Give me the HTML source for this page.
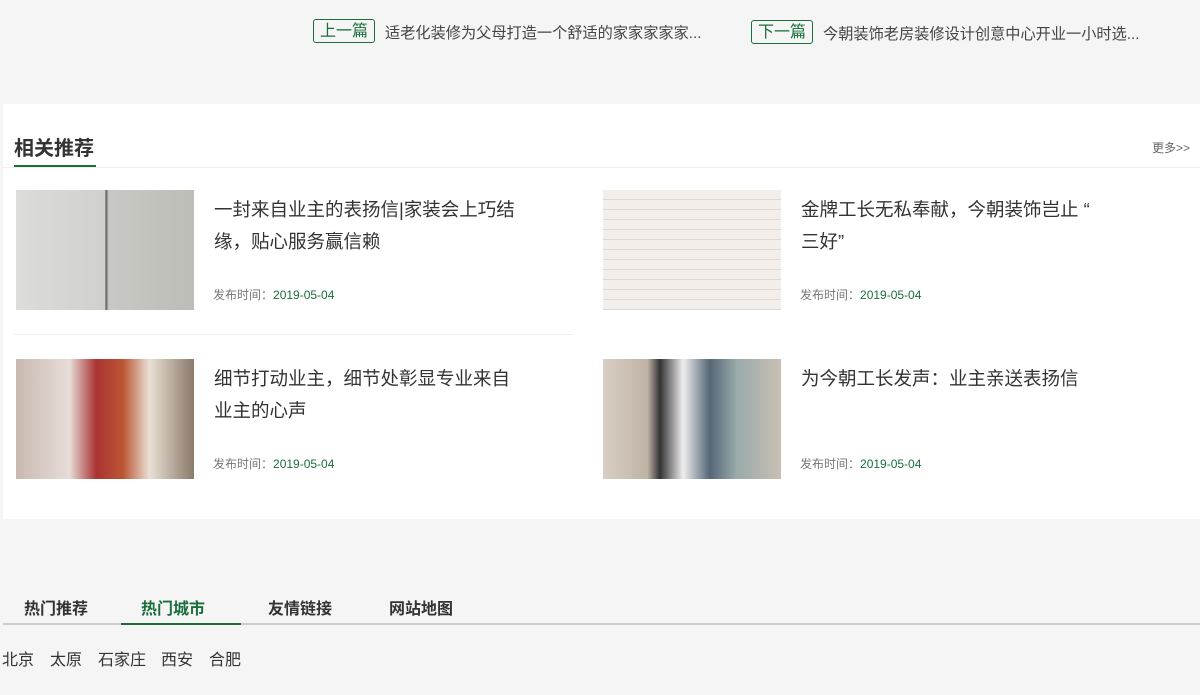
<!DOCTYPE html>
<html><head><meta charset="utf-8"><style>
*{margin:0;padding:0;box-sizing:border-box}
body{width:1200px;height:695px;background:#f5f5f5;font-family:"Liberation Sans","Noto Sans CJK SC",sans-serif;position:relative;overflow:hidden;color:#333}
.a{position:absolute;white-space:nowrap}
.tag{border:1px solid #1a6e3c;border-radius:3px;color:#1a6e3c;font-size:16px;line-height:23px;padding:0 6px;height:24px}
.nt{font-size:15.2px;color:#444}
.panel{position:absolute;left:3px;top:104px;width:1197px;height:415px;background:#fff}
.img{position:absolute;width:178px;height:120px}
.t{font-size:18.5px;color:#333;line-height:32px}
.d{font-size:12px;color:#777}
.d span{color:#1a6e3c}
.tab{font-size:16px;font-weight:bold;color:#333}
.city{font-size:16px;color:#333}
</style></head><body>
<div class="a tag" style="left:313px;top:19px">上一篇</div>
<div class="a nt" style="left:385px;top:21px">适老化装修为父母打造一个舒适的家家家家家...</div>
<div class="a tag" style="left:751px;top:20px">下一篇</div>
<div class="a nt" style="left:823px;top:22px">今朝装饰老房装修设计创意中心开业一小时选...</div>
<div class="panel"></div>
<div class="a" style="left:14px;top:132px;font-size:20px;font-weight:bold;color:#333">相关推荐</div>
<div class="a" style="left:3px;top:167px;width:1197px;height:1px;background:#eee"></div>
<div class="a" style="left:14px;top:165px;width:82px;height:2px;background:#1a6e3c"></div>
<div class="a" style="left:1152px;top:139px;font-size:12px;color:#666">更多&gt;&gt;</div>
<div class="img" style="left:16px;top:190px;background:linear-gradient(90deg,#dcdcd8 0,#d0d0cc 50%,#555 50.5%,#c8c8c4 52%,#bdbdb8 100%)"></div>
<div class="a t" style="left:214px;top:194px">一封来自业主的表扬信|家装会上巧结<br>缘，贴心服务赢信赖</div>
<div class="a d" style="left:213px;top:286px">发布时间：<span>2019-05-04</span></div>
<div class="img" style="left:603px;top:190px;background:repeating-linear-gradient(180deg,#f2eeea 0,#f2eeea 9px,#d9b8b8 10px)"></div>
<div class="a t" style="left:801px;top:194px">金牌工长无私奉献，今朝装饰岂止 “<br>三好”</div>
<div class="a d" style="left:800px;top:286px">发布时间：<span>2019-05-04</span></div>
<div class="a" style="left:14px;top:334px;width:559px;height:1px;background:#eee"></div>
<div class="img" style="left:16px;top:359px;background:linear-gradient(90deg,#c9b9b0 0,#e6ddd8 30%,#a33 45%,#b53 60%,#e8e0d4 75%,#8a7a6a 100%)"></div>
<div class="a t" style="left:214px;top:363px">细节打动业主，细节处彰显专业来自<br>业主的心声</div>
<div class="a d" style="left:213px;top:455px">发布时间：<span>2019-05-04</span></div>
<div class="img" style="left:603px;top:359px;background:linear-gradient(90deg,#d8cfc4 0,#bfb3a5 25%,#333 32%,#eee 45%,#567 60%,#9aa 75%,#c9bfb4 100%)"></div>
<div class="a t" style="left:801px;top:363px">为今朝工长发声：业主亲送表扬信</div>
<div class="a d" style="left:800px;top:455px">发布时间：<span>2019-05-04</span></div>
<div class="a tab" style="left:24px;top:595px">热门推荐</div>
<div class="a tab" style="left:141px;top:595px;color:#1a6e3c">热门城市</div>
<div class="a tab" style="left:268px;top:595px">友情链接</div>
<div class="a tab" style="left:389px;top:595px">网站地图</div>
<div class="a" style="left:3px;top:623px;width:1197px;height:2px;background:#ccc"></div>
<div class="a" style="left:121px;top:623px;width:120px;height:2px;background:#1a6e3c"></div>
<div class="a city" style="left:2px;top:646px">北京</div>
<div class="a city" style="left:50px;top:646px">太原</div>
<div class="a city" style="left:98px;top:646px">石家庄</div>
<div class="a city" style="left:161px;top:646px">西安</div>
<div class="a city" style="left:209px;top:646px">合肥</div>
</body></html>
